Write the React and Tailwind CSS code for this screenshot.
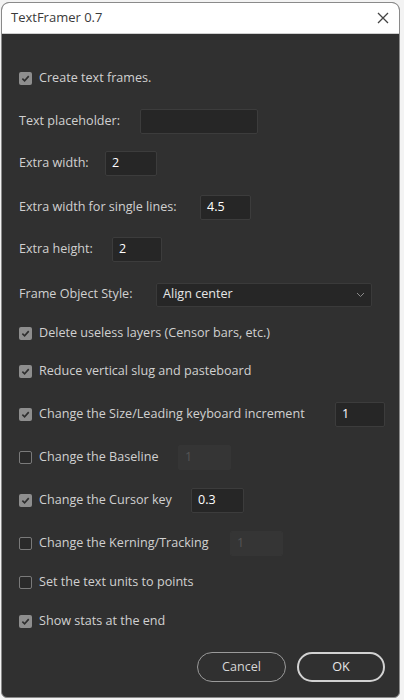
import React from 'react';

const font = { fontFamily: '"Open Sans", "Noto Sans", sans-serif' };

function Check({ on }) {
  return on ? (
    <span className="w-[13px] h-[13px] rounded-[2px] bg-[#8e8e8e] flex items-center justify-center shrink-0">
      <svg width="9" height="9" viewBox="0 0 10 10">
        <path d="M1.5 5.2 L4 7.6 L8.6 2.4" fill="none" stroke="#2e2e2e" strokeWidth="1.8" />
      </svg>
    </span>
  ) : (
    <span className="w-[13px] h-[13px] rounded-[2px] border border-[#7a7a7a] bg-[#2a2a2a] shrink-0" />
  );
}

function Field({ w, value, disabled }) {
  return (
    <div
      className={`h-[25px] rounded-[2px] border flex items-center px-[6px] text-[12.5px] shrink-0 ${
        disabled ? 'bg-[#353535] border-[#353535] text-[#555]' : 'bg-[#262626] border-[#3c3c3c] text-white'
      } ${w}`}
    >
      {value}
    </div>
  );
}

function CheckRow({ on, label, labelW = '', className, children }) {
  return (
    <div className={`h-[24px] flex items-center ${className}`}>
      <Check on={on} />
      <span className={`ml-[7px] text-[12.6px] text-[#d0d0d0] whitespace-nowrap ${labelW}`}>{label}</span>
      {children}
    </div>
  );
}

function LabelRow({ label, labelW, className, children }) {
  return (
    <div className={`h-[25px] flex items-center ${className}`}>
      <span className={`text-[12.6px] text-[#d0d0d0] whitespace-nowrap shrink-0 ${labelW}`}>{label}</span>
      {children}
    </div>
  );
}

export default function App() {
  return (
    <div className="w-[404px] h-[700px] bg-[#f3f3f3] pt-[2px] px-[1px]" style={font}>
      <div className="w-[399px] h-[696px] rounded-t-[8px] rounded-b-[6px] border border-[#8a8a8a] overflow-hidden flex flex-col bg-[#303030]">
        {/* Title bar */}
        <div className="h-[31px] bg-white border-b border-[#cfcfcf] flex items-center justify-between pl-[9px] pr-[10px] shrink-0">
          <span className="text-[13px] text-[#3a3a3a]">TextFramer 0.7</span>
          <svg width="12" height="12" viewBox="0 0 12 12">
            <path d="M1 1 L11 11 M11 1 L1 11" stroke="#444" strokeWidth="1.3" />
          </svg>
        </div>

        {/* Body */}
        <div className="flex-1 flex flex-col pl-[17px] pr-[14px] pt-[32px]">
          <CheckRow on label="Create text frames." />

          <LabelRow label="Text placeholder:" labelW="w-[121px]" className="mt-[19px]">
            <Field w="w-[118px]" value="" />
          </LabelRow>

          <LabelRow label="Extra width:" labelW="w-[86px]" className="mt-[17px]">
            <Field w="w-[52px]" value="2" />
          </LabelRow>

          <LabelRow label="Extra width for single lines:" labelW="w-[181px]" className="mt-[19px]">
            <Field w="w-[51px]" value="4.5" />
          </LabelRow>

          <LabelRow label="Extra height:" labelW="w-[93px]" className="mt-[17px]">
            <Field w="w-[50px]" value="2" />
          </LabelRow>

          <LabelRow label="Frame Object Style:" labelW="w-[137px]" className="mt-[20px] h-[24px]">
            <div className="w-[216px] h-[24px] rounded-[2px] bg-[#262626] border border-[#3a3a3a] flex items-center justify-between px-[6px] text-[12.6px] text-[#e6e6e6]">
              <span>Align center</span>
              <svg width="9" height="6" viewBox="0 0 9 6">
                <path d="M1 1 L4.5 4.5 L8 1" fill="none" stroke="#8a8a8a" strokeWidth="1" />
              </svg>
            </div>
          </LabelRow>

          <CheckRow on label="Delete useless layers (Censor bars, etc.)" className="mt-[14px]" />
          <CheckRow on label="Reduce vertical slug and pasteboard" className="mt-[14px]" />

          <CheckRow on label="Change the Size/Leading keyboard increment" className="mt-[19px] h-[25px]">
            <div className="ml-auto">
              <Field w="w-[50px]" value="1" />
            </div>
          </CheckRow>

          <CheckRow label="Change the Baseline" labelW="w-[139px]" className="mt-[18px] h-[25px]">
            <Field w="w-[53px]" value="1" disabled />
          </CheckRow>

          <CheckRow on label="Change the Cursor key" labelW="w-[152px]" className="mt-[18px] h-[25px]">
            <Field w="w-[53px]" value="0.3" />
          </CheckRow>

          <CheckRow label="Change the Kerning/Tracking" labelW="w-[191px]" className="mt-[18px] h-[25px]">
            <Field w="w-[53px]" value="1" disabled />
          </CheckRow>

          <CheckRow label="Set the text units to points" className="mt-[14px]" />
          <CheckRow on label="Show stats at the end" className="mt-[15px]" />

          <div className="mt-[19px] flex justify-end gap-[11px]">
            <button className="w-[89px] h-[30px] rounded-full border-[1.5px] border-[#9a9a9a] text-[12.6px] text-[#d6d6d6]">
              Cancel
            </button>
            <button className="w-[88px] h-[30px] rounded-full border-2 border-[#d2d2d2] text-[12.6px] text-[#e6e6e6]">
              OK
            </button>
          </div>
        </div>
      </div>
    </div>
  );
}
